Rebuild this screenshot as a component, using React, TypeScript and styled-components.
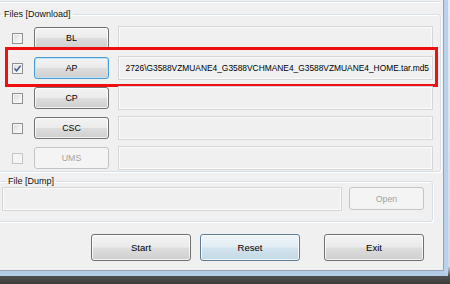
import styled, { createGlobalStyle, css } from 'styled-components';

const GlobalStyle = createGlobalStyle`
  html, body {
    margin: 0;
    padding: 0;
  }
  body {
    font-family: "Liberation Sans", Arial, sans-serif;
    background: #4a4a4a;
  }
`;

const Screen = styled.div`
  width: 450px;
  height: 284px;
  overflow: hidden;
  background: linear-gradient(to bottom, #e6edf4 0, #cfdbe7 266px, #505050 276px, #3c3c3c 284px);
`;

const Frame = styled.div`
  width: 448px;
  height: 276px;
  box-sizing: border-box;
  border-right: 4px solid #b9d1ea;
  border-bottom: 5px solid #b4cde6;
`;

const Client = styled.div`
  width: 444px;
  height: 271px;
  box-sizing: border-box;
  border-right: 1px solid #97a3b0;
  border-bottom: 1px solid #97a3b0;
  background: #f0f0f0;
  display: flex;
  flex-direction: column;
  overflow: hidden;
`;

const PrevEdge = styled.div`
  margin-top: 1px;
  width: 441px;
  height: 0;
  border-top: 1px solid #d5dfe5;
  border-bottom: 1px solid #ffffff;
`;

const Group = styled.fieldset<{ $width: number; $top: number; $padRight: number; $padBottom: number }>`
  box-sizing: border-box;
  margin: ${(p) => p.$top}px 0 0 -6px;
  width: ${(p) => p.$width}px;
  padding: 0 ${(p) => p.$padRight}px ${(p) => p.$padBottom}px 7px;
  border: 1px solid #d5dfe5;
  border-radius: 3px;
  box-shadow: inset 1px 1px 0 #ffffff, 1px 1px 0 #ffffff;
  min-width: 0;
`;

const Caption = styled.legend<{ $indent?: number }>`
  padding: 0 2px;
  margin-left: ${(p) => p.$indent ?? 0}px;
  font-size: 9px;
  line-height: 11px;
  color: #111;
`;

const RowList = styled.div`
  display: flex;
  flex-direction: column;
  gap: 6px;
  padding-top: 6px;
`;

const Row = styled.div<{ $marked?: boolean }>`
  position: relative;
  display: flex;
  align-items: center;
  height: 24px;
  padding-left: 10px;

  ${(p) =>
    p.$marked &&
    css`
      &::after {
        content: '';
        position: absolute;
        top: -9px;
        left: 3px;
        right: -5px;
        bottom: -7px;
        border: 3px solid #ee1010;
        pointer-events: none;
      }
    `}
`;

const Check = styled.span<{ $disabled?: boolean }>`
  box-sizing: border-box;
  width: 11px;
  height: 11px;
  margin-right: 11px;
  flex: none;
  display: flex;
  align-items: center;
  justify-content: center;
  border: 1px solid ${(p) => (p.$disabled ? '#c4c4c4' : '#8e8f8f')};
  background: ${(p) =>
    p.$disabled ? '#f4f4f4' : 'linear-gradient(135deg, #d8d8d8 0%, #f0f0f0 60%, #fbfbfb 100%)'};
  box-shadow: inset 0 0 0 1px #f6f6f6;
`;

type Variant = 'normal' | 'focused' | 'default' | 'disabled';

const Button = styled.div<{ $variant?: Variant; $w: number; $h: number; $size?: number; $gapRight?: number }>`
  box-sizing: border-box;
  flex: none;
  width: ${(p) => p.$w}px;
  height: ${(p) => p.$h}px;
  margin-right: ${(p) => p.$gapRight ?? 0}px;
  display: flex;
  align-items: center;
  justify-content: center;
  border-radius: 3px;
  font-size: ${(p) => p.$size ?? 8.8}px;
  color: #000;
  border: 1px solid #707070;
  background: linear-gradient(#f3f3f3 0%, #ebebeb 48%, #dddddd 52%, #cfcfcf 100%);
  box-shadow: inset 0 0 0 1px rgba(255, 255, 255, 0.75);

  ${(p) =>
    p.$variant === 'focused' &&
    css`
      border-color: #4a9bd1;
      box-shadow: inset 0 0 0 1px #bfe3f8;
    `}
  ${(p) =>
    p.$variant === 'default' &&
    css`
      border-color: #5b7c92;
      background: linear-gradient(#eef5f9 0%, #e2edf4 48%, #d2e3ee 52%, #c4d9e6 100%);
      box-shadow: inset 0 0 0 1px rgba(255, 255, 255, 0.8);
    `}
  ${(p) =>
    p.$variant === 'disabled' &&
    css`
      color: #a3a3a3;
      border-color: #c2c5c7;
      background: #f4f4f4;
      box-shadow: none;
    `}
`;

const Field = styled.div`
  box-sizing: border-box;
  flex: 1;
  min-width: 0;
  height: 24px;
  display: flex;
  align-items: center;
  justify-content: flex-end;
  overflow: hidden;
  white-space: nowrap;
  padding: 0 3px;
  font-size: 8.4px;
  color: #000;
  border: 1px solid #d6d6d6;
  box-shadow: inset 0 0 0 1px #fafafa;
  background: #f0f0f0;
`;

const DumpRow = styled.div`
  display: grid;
  grid-template-columns: 1fr 75px;
  column-gap: 7px;
  align-items: start;
  height: 23px;
`;

const ButtonBar = styled.div`
  display: flex;
  margin-top: 12px;
  padding-left: 91px;
`;

const Tick = () => (
  <svg width="9" height="9" viewBox="0 0 9 9">
    <path d="M1.5 4.6 L3.6 6.8 L7.6 1.8" fill="none" stroke="#3d5b94" strokeWidth="1.5" />
  </svg>
);

const files = [
  { name: 'BL', checked: false, path: '' },
  { name: 'AP', checked: true, path: '2726\\G3588VZMUANE4_G3588VCHMANE4_G3588VZMUANE4_HOME.tar.md5' },
  { name: 'CP', checked: false, path: '' },
  { name: 'CSC', checked: false, path: '' },
  { name: 'UMS', checked: false, path: '', disabled: true },
];

export default function App() {
  return (
    <>
      <GlobalStyle />
      <Screen>
        <Frame>
          <Client>
            <PrevEdge />
            <Group $width={447} $top={6} $padRight={7} $padBottom={1}>
              <Caption>Files [Download]</Caption>
              <RowList>
                {files.map((f) => (
                  <Row key={f.name} $marked={f.name === 'AP'}>
                    <Check $disabled={f.disabled}>{f.checked && <Tick />}</Check>
                    <Button
                      $w={75}
                      $h={22}
                      $gapRight={9}
                      $variant={f.disabled ? 'disabled' : f.name === 'AP' ? 'focused' : 'normal'}
                    >
                      {f.name}
                    </Button>
                    <Field>{f.path}</Field>
                  </Row>
                ))}
              </RowList>
            </Group>
            <Group $width={439} $top={4} $padRight={8} $padBottom={11}>
              <Caption $indent={4}>File [Dump]</Caption>
              <DumpRow>
                <Field />
                <Button $w={75} $h={23} $variant="disabled">
                  Open
                </Button>
              </DumpRow>
            </Group>
            <ButtonBar>
              <Button $w={100} $h={27} $size={9.5} $gapRight={9}>
                Start
              </Button>
              <Button $w={100} $h={27} $size={9.5} $gapRight={24} $variant="default">
                Reset
              </Button>
              <Button $w={100} $h={27} $size={9.5}>
                Exit
              </Button>
            </ButtonBar>
          </Client>
        </Frame>
      </Screen>
    </>
  );
}
